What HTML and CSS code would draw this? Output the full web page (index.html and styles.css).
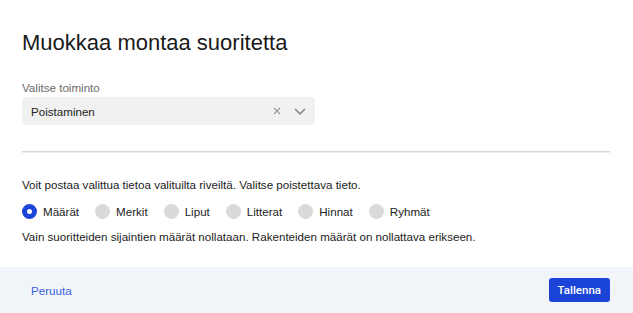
FILE: index.html
```html
<!DOCTYPE html>
<html lang="fi">
<head>
    <meta charset="UTF-8">
    <meta name="viewport" content="width=device-width, initial-scale=1.0">
    <title>Muokkaa montaa suoritetta</title>
    <link rel="stylesheet" href="styles.css">
</head>
<body>
    <div class="dialog">
        <div class="dialog-body">
            <h1 class="dialog-title">Muokkaa montaa suoritetta</h1>

            <div class="field-label">Valitse toiminto</div>
            <div class="select">
                <span class="select-value">Poistaminen</span>
                <span class="select-clear">
                    <svg width="8" height="8" viewBox="0 0 8 8"><path d="M1 1L7 7M7 1L1 7" stroke="#9a9a9a" stroke-width="1.1" fill="none"/></svg>
                </span>
                <span class="select-arrow">
                    <svg width="12" height="7" viewBox="0 0 12 7"><path d="M1 1L6 5.8L11 1" stroke="#8a8a8a" stroke-width="1.6" fill="none"/></svg>
                </span>
            </div>

            <div class="divider"></div>

            <p class="text">Voit postaa valittua tietoa valituilta riveiltä. Valitse poistettava tieto.</p>

            <div class="radio-group">
                <label class="radio"><span class="radio-dot checked"></span>Määrät</label>
                <label class="radio"><span class="radio-dot"></span>Merkit</label>
                <label class="radio"><span class="radio-dot"></span>Liput</label>
                <label class="radio"><span class="radio-dot"></span>Litterat</label>
                <label class="radio"><span class="radio-dot"></span>Hinnat</label>
                <label class="radio"><span class="radio-dot"></span>Ryhmät</label>
            </div>

            <p class="text">Vain suoritteiden sijaintien määrät nollataan. Rakenteiden määrät on nollattava erikseen.</p>
        </div>

        <div class="dialog-footer">
            <button class="btn-link">Peruuta</button>
            <button class="btn-primary">Tallenna</button>
        </div>
    </div>
</body>
</html>
```

FILE: styles.css
```css
body {
    margin: 0;
    font-family: "Liberation Sans", Arial, sans-serif;
    font-size: 11.6px;
    color: #222;
    background: #fff;
}
.dialog {
    display: flex;
    flex-direction: column;
    height: 100vh;
}
.dialog-body {
    flex: 1;
    padding: 30px 23px 0 22px;
}
.dialog-title {
    margin: 0;
    font-size: 22px;
    font-weight: normal;
    line-height: 26px;
    color: #1a1a1a;
}
.field-label {
    margin-top: 25px;
    line-height: 14px;
    color: #6b6b6b;
}
.select {
    margin-top: 2px;
    width: 293px;
    height: 28px;
    display: flex;
    align-items: center;
    background: #f1f1f1;
    border-radius: 4px;
    box-sizing: border-box;
    padding: 0 9px 0 9px;
}
.select-value {
    flex: 1;
}
.select-clear {
    display: flex;
    margin-right: 13px;
}
.select-arrow {
    display: flex;
}
.divider {
    margin-top: 26px;
    height: 1px;
    background: #d6d6d6;
    box-shadow: 0 1px 0 #ececec;
}
.text {
    margin: 26px 0 0;
    line-height: 14px;
}
.text + .radio-group {
    margin-top: 11px;
}
.radio-group + .text {
    margin-top: 11px;
}
.radio-group {
    display: flex;
    gap: 16px;
    height: 16px;
    align-items: center;
}
.radio {
    display: flex;
    align-items: center;
    gap: 6px;
}
.radio-dot {
    width: 15px;
    height: 15px;
    border-radius: 50%;
    background: #dadada;
    box-sizing: border-box;
}
.radio-dot.checked {
    background: #fff;
    border: 5px solid #1b45d8;
}
.dialog-footer {
    height: 46px;
    background: #f1f4f9;
    display: flex;
    align-items: center;
    justify-content: space-between;
    padding: 0 23px 0 22px;
}
.btn-link {
    background: none;
    border: none;
    padding: 0 9px;
    font-family: "Liberation Sans", Arial, sans-serif;
    font-size: 11.6px;
    color: #3b62de;
    cursor: pointer;
}
.btn-primary {
    height: 24px;
    padding: 0 9px;
    background: #1b45d8;
    color: #fff;
    border: none;
    border-radius: 3px;
    font-family: Roboto, sans-serif;
    font-weight: 500;
    font-size: 11.5px;
    cursor: pointer;
}
```
